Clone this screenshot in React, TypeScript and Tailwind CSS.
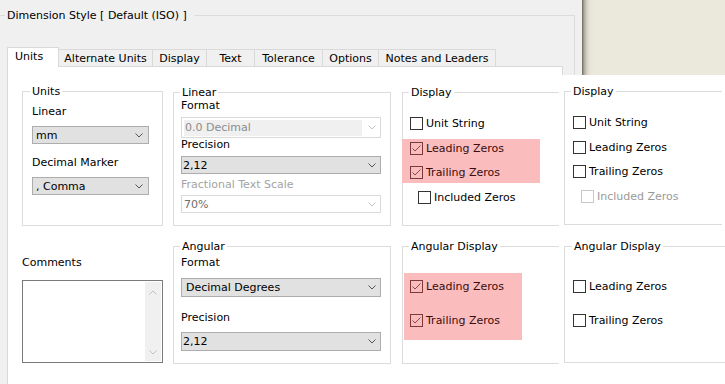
import React from "react";

type Tone = "normal" | "pink" | "disabled";

function Chevron({ cls, up = false }: { cls: string; up?: boolean }) {
  return (
    <svg width="8" height="5" viewBox="0 0 8 5" className={cls}>
      <path
        d={up ? "M0.5 4.5L4 1L7.5 4.5" : "M0.5 0.5L4 4L7.5 0.5"}
        fill="none"
        strokeWidth="1"
      />
    </svg>
  );
}

function Check({
  label,
  checked = false,
  tone = "normal",
  className = "",
}: {
  label: string;
  checked?: boolean;
  tone?: Tone;
  className?: string;
}) {
  const box =
    tone === "pink"
      ? "border-[#7a3a3a] bg-transparent"
      : tone === "disabled"
      ? "border-[#c8c8c8] bg-white"
      : "border-[#333333] bg-white";
  const text =
    tone === "pink" ? "text-[#3a0c0c]" : tone === "disabled" ? "text-[#9a9a9a]" : "text-black";
  return (
    <div className={"flex h-[13px] items-center " + className}>
      <div className={"flex h-[13px] w-[13px] shrink-0 items-center justify-center border " + box}>
        {checked && (
          <svg width="11" height="11" viewBox="0 0 11 11">
            <path d="M1.5 5.5L4 8L9.5 2.5" fill="none" stroke="#8a4848" strokeWidth="1" />
          </svg>
        )}
      </div>
      <span className={"ml-[3px] whitespace-nowrap " + text}>{label}</span>
    </div>
  );
}

function Tab({ label, w }: { label: string; w: string }) {
  return (
    <div
      className={
        "flex h-[17px] shrink-0 justify-center border-t border-r border-[#d9d9d9] pt-[2px] whitespace-nowrap " +
        w
      }
    >
      {label}
    </div>
  );
}

export default function App() {
  return (
    <div className="h-[384px] w-[725px] overflow-hidden bg-[#f0f0f0] font-['DejaVu_Sans',sans-serif] text-[11px] leading-[13px] text-black">
      {/* top section */}
      <div className="flex h-[75px]">
        <div className="w-[582px] shrink-0">
          <fieldset className="mt-[9px] w-[575px] border-t border-r border-[#dcdcdc]">
            <legend className="ml-[5px] pl-[2px] pr-[7px] leading-[13px]">
              Dimension Style [ Default (ISO) ]
            </legend>
            <div className="mt-[25px] ml-[7px] flex h-[19px] items-end">
              <div className="relative z-10 -mb-px h-[20px] w-[52px] shrink-0 border border-b-0 border-[#d9d9d9] bg-white pt-[2px] pl-[7px]">
                Units
              </div>
              <Tab label="Alternate Units" w="w-[94px]" />
              <Tab label="Display" w="w-[54px]" />
              <Tab label="Text" w="w-[48px]" />
              <Tab label="Tolerance" w="w-[68px]" />
              <Tab label="Options" w="w-[56px]" />
              <Tab label="Notes and Leaders" w="w-[117px]" />
            </div>
            <div className="ml-[7px] h-[9px] w-[556px] border-x border-t border-[#d9d9d9] bg-white" />
          </fieldset>
        </div>
        <div className="flex-1 bg-[linear-gradient(to_right,#67675f_0px,#a9a79c_2px,#d6d3c6_5px,#e8e5d8_8px,#ebe8dc_12px)]" />
      </div>

      {/* body */}
      <div className="flex h-[309px]">
        <div className="w-[7px] shrink-0" />
        <div className="min-w-0 flex-1 overflow-hidden border-l border-[#d9d9d9] bg-white">
          {/* row 1 */}
          <div className="flex items-start">
            <fieldset className="ml-[14px] mt-[10px] h-[141px] w-[141px] shrink-0 border border-[#dcdcdc]">
              <legend className="ml-[7px] px-[2px]">Units</legend>
              <div className="pl-[9px]">
                <div className="mt-[7px]">Linear</div>
                <div className="mt-[8px] flex h-[18px] w-[117px] items-center justify-between border border-[#adadad] bg-[#e1e1e1] pl-[3px] pr-[5px]">
                  <span>mm</span>
                  <Chevron cls="stroke-[#555555]" />
                </div>
                <div className="mt-[12px]">Decimal Marker</div>
                <div className="mt-[8px] flex h-[18px] w-[117px] items-center justify-between border border-[#adadad] bg-[#e1e1e1] pl-[3px] pr-[5px]">
                  <span>, Comma</span>
                  <Chevron cls="stroke-[#555555]" />
                </div>
              </div>
            </fieldset>

            <fieldset className="ml-[10px] mt-[11px] h-[140px] w-[218px] shrink-0 border border-[#dcdcdc]">
              <legend className="ml-[6px] px-[2px]">Linear</legend>
              <div className="pl-[7px]">
                <div>Format</div>
                <div className="mt-[5px] flex h-[21px] w-[200px] items-center border border-[#d9d9d9] bg-white p-[2px] pr-[4px]">
                  <div className="flex h-[16px] w-[178px] items-center bg-[#f0f0f0] pl-px text-[#8c8c8c]">
                    0.0 Decimal
                  </div>
                  <div className="flex flex-1 justify-end">
                    <Chevron cls="stroke-[#c4c4c4]" />
                  </div>
                </div>
                <div>Precision</div>
                <div className="mt-[5px] flex h-[18px] w-[200px] items-center justify-between border border-[#adadad] bg-[#e1e1e1] pl-[1px] pr-[4px]">
                  <span>2,12</span>
                  <Chevron cls="stroke-[#555555]" />
                </div>
                <div className="mt-[4px] text-[#a3a3a3]">Fractional Text Scale</div>
                <div className="mt-[4px] flex h-[18px] w-[200px] items-center justify-between border border-[#d9d9d9] bg-white pl-[2px] pr-[4px] text-[#6e6e6e]">
                  <span>70%</span>
                  <Chevron cls="stroke-[#c4c4c4]" />
                </div>
              </div>
            </fieldset>

            <fieldset className="ml-[11px] mt-[11px] h-[140px] w-[157px] shrink-0 border-y border-l border-[#dcdcdc]">
              <legend className="ml-[6px] px-[2px]">Display</legend>
              <Check label="Unit String" className="mt-[18px] ml-[7px]" />
              <div className="-ml-px mt-[9px] w-[138px] bg-[#fabcbc] pt-[3px] pb-[4px] pl-[8px]">
                <Check label="Leading Zeros" checked tone="pink" />
                <Check label="Trailing Zeros" checked tone="pink" className="mt-[11px]" />
              </div>
              <Check label="Included Zeros" className="mt-[8px] ml-[15px]" />
            </fieldset>

            <fieldset className="ml-[5px] mt-[10px] h-[140px] w-[158px] shrink-0 border-y border-l border-[#dcdcdc]">
              <legend className="ml-[6px] px-[2px]">Display</legend>
              <Check label="Unit String" className="mt-[18px] ml-[8px]" />
              <Check label="Leading Zeros" className="mt-[12px] ml-[8px]" />
              <Check label="Trailing Zeros" className="mt-[11px] ml-[8px]" />
              <Check label="Included Zeros" tone="disabled" className="mt-[12px] ml-[16px]" />
            </fieldset>
          </div>

          {/* row 2 */}
          <div className="flex items-start">
            <div className="ml-[14px] w-[141px] shrink-0">
              <div className="mt-[30px]">Comments</div>
              <div className="mt-[11px] flex h-[83px] w-[141px] justify-end border border-[#7a7a7a] bg-white p-px">
                <div className="flex h-full w-[16px] flex-col items-center justify-between bg-[#f0f0f0] pt-[8px] pb-[6px]">
                  <Chevron cls="stroke-[#c0c0c0]" up />
                  <Chevron cls="stroke-[#c0c0c0]" />
                </div>
              </div>
            </div>

            <fieldset className="ml-[10px] mt-[14px] h-[124px] w-[218px] shrink-0 border border-[#dcdcdc]">
              <legend className="ml-[6px] px-[2px]">Angular</legend>
              <div className="pl-[7px]">
                <div className="mt-[3px]">Format</div>
                <div className="mt-[9px] flex h-[19px] w-[200px] items-center justify-between border border-[#adadad] bg-[#e1e1e1] pl-[4px] pr-[4px]">
                  <span>Decimal Degrees</span>
                  <Chevron cls="stroke-[#555555]" />
                </div>
                <div className="mt-[14px]">Precision</div>
                <div className="mt-[8px] flex h-[19px] w-[200px] items-center justify-between border border-[#adadad] bg-[#e1e1e1] pl-[1px] pr-[4px]">
                  <span>2,12</span>
                  <Chevron cls="stroke-[#555555]" />
                </div>
              </div>
            </fieldset>

            <fieldset className="ml-[11px] mt-[14px] h-[124px] w-[157px] shrink-0 border-y border-l border-[#dcdcdc]">
              <legend className="ml-[6px] px-[2px]">Angular Display</legend>
              <div className="ml-px mt-[20px] w-[118px] bg-[#fabcbc] pt-[7px] pb-[13px] pl-[6px]">
                <Check label="Leading Zeros" checked tone="pink" />
                <Check label="Trailing Zeros" checked tone="pink" className="mt-[21px]" />
              </div>
            </fieldset>

            <fieldset className="ml-[5px] mt-[14px] h-[123px] w-[170px] shrink-0 border-y border-l border-[#dcdcdc]">
              <legend className="ml-[7px] px-[2px]">Angular Display</legend>
              <Check label="Leading Zeros" className="mt-[27px] ml-[8px]" />
              <Check label="Trailing Zeros" className="mt-[21px] ml-[8px]" />
            </fieldset>
          </div>
        </div>
      </div>
    </div>
  );
}
